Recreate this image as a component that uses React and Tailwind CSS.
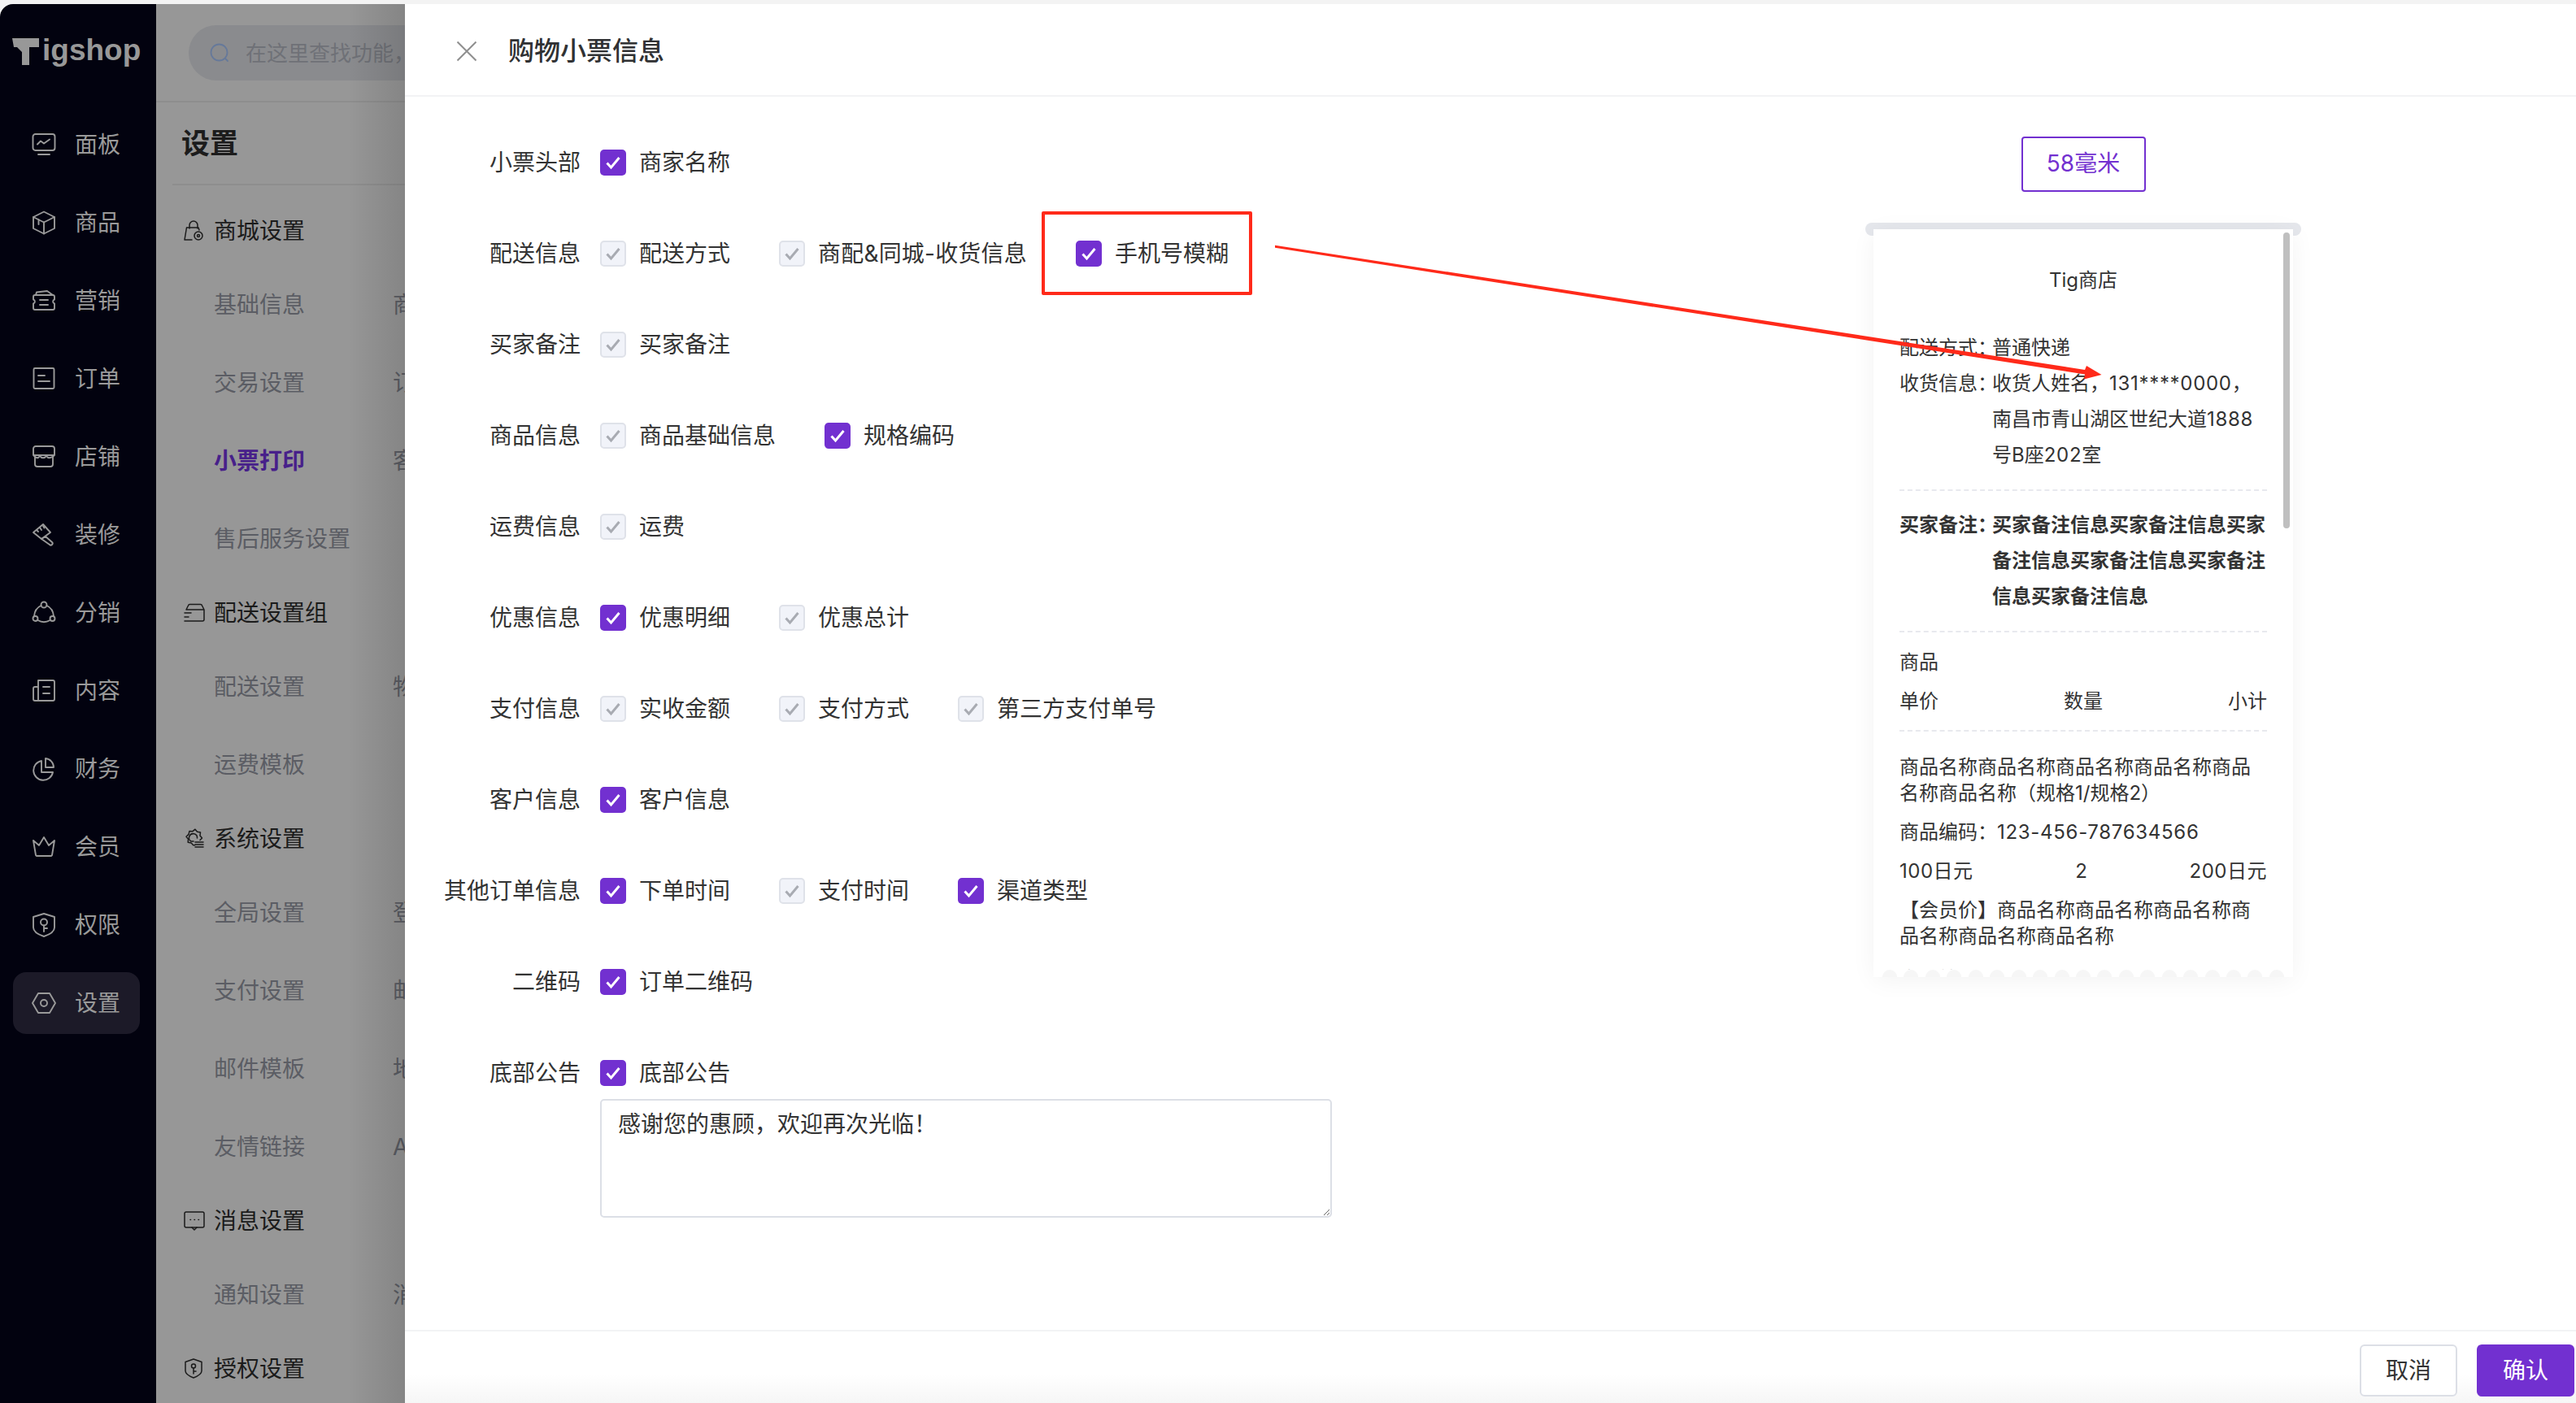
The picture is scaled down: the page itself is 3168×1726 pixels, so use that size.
import React from 'react';

// Sidebar icons, drawn on a 30 box
const navIcons = {
  panel: (<><rect x="1.500" y="2" width="27" height="20" rx="3" /><path d="M7 14.500l4-4 4 3 7-5" /><path d="M8 27h14" /></>),
  goods: (<><path d="M15 1.500l13 6.500v14l-13 6.500L2 22V8z" /><path d="M2 8l13 6.500L28 8M15 14.500v14M8.500 11v6" /></>),
  ticket: (<><path d="M4 8h22a2 2 0 0 1 2 2v3.500a2.600 2.600 0 0 0 0 5V24a2 2 0 0 1-2 2H4a2 2 0 0 1-2-2v-5.500a2.600 2.600 0 0 0 0-5V10a2 2 0 0 1 2-2z" /><path d="M5 8l1-3.500 13-1.500 7 5M10 14h10M10 20h10" /></>),
  order: (<><rect x="2.500" y="2" width="25" height="25" rx="1.500" /><path d="M8 11h8M8 18h14" /></>),
  shop: (<><path d="M5 2h20a3 3 0 0 1 3 3v8H2V5a3 3 0 0 1 3-3z" /><path d="M4 13v11a3 3 0 0 0 3 3h16a3 3 0 0 0 3-3V13" /><path d="M3 14c3 3 5 3 7 0 2 3 6 3 8 0 2 3 5 3 9 0" /></>),
  brush: (<><path d="M2 12L14 2l9 10-11 8z" /><path d="M6 9l2 2M10 6l2 3M14 4l1.500 2.500M12 20l5-3 8 7a2 2 0 0 1-3 3z" /></>),
  share: (<><circle cx="15" cy="5" r="3.500" /><circle cx="4.500" cy="22" r="3" /><circle cx="25.500" cy="22" r="3" /><path d="M11.500 6C7 8 3.500 13 3 19M18.500 6c4.500 2 8 7 8.500 13M7.500 24c5 3 10 3 15 0" /></>),
  content: (<><path d="M8 2h18a2 2 0 0 1 2 2v21a2 2 0 0 1-2 2H4a2 2 0 0 1-2-2V12a2 2 0 0 1 2-2h4z" /><path d="M8 10v17M14 10h8M14 18h8" /></>),
  pie: (<><path d="M12 5a12 12 0 1 0 14 14H12z" /><path d="M17 2a11 11 0 0 1 10 11H17z" /></>),
  crown: (<><path d="M2 7l7 6 6-10 6 10 7-6-3 18a2 2 0 0 1-2 1H7a2 2 0 0 1-2-1z" /></>),
  shield: (<><path d="M15 1l13 4v13c0 5-7 9-13 11C9 27 2 23 2 18V5z" /><circle cx="15" cy="11.500" r="4" /><path d="M15 15.500V23M15 19h4" /></>),
  gear: (<><path d="M8 3h14l7 12-7 12H8L1 15z" /><circle cx="15" cy="15" r="4" /></>),
};

const menuIcons = {
  bag: (<><path d="M7 10V6a5 5 0 0 1 10 0v4" /><path d="M4 9h14l1 3M3.500 9L1 24h9" /><circle cx="18" cy="19" r="5" /><circle cx="18" cy="19" r="1.500" /></>),
  box: (<><path d="M3 9l2.500-5a2 2 0 0 1 2-1.500h13a2 2 0 0 1 2 1.500L25 9v12a2 2 0 0 1-2 2H1M3 9h22M1 13h8M1 18h5" /></>),
  cog: (<><path d="M20 14.500l2.500-2.500-2.500-3 .5-4-4-.8-2.500-3-3 2.500-4-.3-1 4-3 2.800 2.500 3-.3 4 4 .8 2.500 2.800h2" /><path d="M16.500 12a5 5 0 1 0-7.500 4h3M14 17h10M14 20h10M14 23h10" /></>),
  msg: (<><rect x="1" y="2" width="24" height="19" rx="2" /><path d="M10 21l3 3 3-3M8 11.500h.500M13 11.500h.500M18 11.500h.500" /></>),
  key: (<><path d="M12 1l10 3.500v11c0 4-5 6.500-10 8.500-5-2-10-4.500-10-8.500v-11z" /><circle cx="12" cy="9.500" r="2.500" /><path d="M12 12v7M12 16h3" /></>),
};

const nav = [
  ['panel', '面板'], ['goods', '商品'], ['ticket', '营销'], ['order', '订单'], ['shop', '店铺'], ['brush', '装修'],
  ['share', '分销'], ['content', '内容'], ['pie', '财务'], ['crown', '会员'], ['shield', '权限'], ['gear', '设置'],
];

const menu = [
  { icon: 'bag', title: '商城设置' },
  { name: '基础信息', other: '商品设置' },
  { name: '交易设置', other: '订单设置' },
  { name: '小票打印', other: '客服设置', active: true },
  { name: '售后服务设置' },
  { icon: 'box', title: '配送设置组' },
  { name: '配送设置', other: '物流公司' },
  { name: '运费模板' },
  { icon: 'cog', title: '系统设置' },
  { name: '全局设置', other: '登录设置' },
  { name: '支付设置', other: '邮箱设置' },
  { name: '邮件模板', other: '地区管理' },
  { name: '友情链接', other: 'API设置' },
  { icon: 'msg', title: '消息设置' },
  { name: '通知设置', other: '消息模板' },
  { icon: 'key', title: '授权设置' },
];

// [label, [text, checked, extra class]...]
const rows = [
  ['小票头部', [['商家名称', true]]],
  ['配送信息', [['配送方式', false], ['商配&同城-收货信息', false, 'tracking-[0.2px]'], ['手机号模糊', true]]],
  ['买家备注', [['买家备注', false]]],
  ['商品信息', [['商品基础信息', false], ['规格编码', true]]],
  ['运费信息', [['运费', false]]],
  ['优惠信息', [['优惠明细', true], ['优惠总计', false]]],
  ['支付信息', [['实收金额', false], ['支付方式', false], ['第三方支付单号', false]]],
  ['客户信息', [['客户信息', true]]],
  ['其他订单信息', [['下单时间', true], ['支付时间', false], ['渠道类型', true]]],
  ['二维码', [['订单二维码', true]]],
];

function Check({ on, text, extra = '' }) {
  return (
    <div className="flex items-center gap-4 mr-[60px]">
      <span className={on
        ? 'flex items-center justify-center w-8 h-8 rounded-[5px] bg-[#7230d0]'
        : 'flex items-center justify-center w-8 h-8 rounded-[5px] bg-[#f1f3f9] border-2 border-[#dfe2e9]'}>
        <svg width="24" height="24" viewBox="0 0 24 24" fill="none" stroke={on ? '#ffffff' : '#a8abb2'} strokeWidth="3">
          <path d="M4.500 12.500l5 5.500 10-12" />
        </svg>
      </span>
      <span className={`whitespace-nowrap ${extra}`}>{text}</span>
    </div>
  );
}

function Dash() {
  return <div className="border-t-2 border-dashed border-[#e8e9ee]" />;
}

export default function App() {
  return (
    <div className="relative w-[3168px] h-[1726px] overflow-hidden bg-[#f3f3f3] font-['Inter','Noto_Sans_CJK_SC',sans-serif] text-[28px] text-[#333333]">
      <div className="h-[5px]" />
      <div className="flex h-[1721px]">
        {/* sidebar */}
        <div className="w-[192px] shrink-0 bg-[#02020f] rounded-tl-[16px] text-[#9a9a9a]">
          <div className="flex items-start h-[135px] pl-[15px] pt-[33px]">
            <svg width="34" height="34" viewBox="0 0 34 34" className="shrink-0 mt-[9px]" fill="#989898">
              <path d="M0 0h33v11H21v22h-9V17L6 11H2z" />
            </svg>
            <span className="ml-[3px] font-['Liberation_Sans',sans-serif] font-bold text-[37px] leading-[48px] text-[#989898]">igshop</span>
          </div>
          <div className="flex flex-col gap-5">
            {nav.map(([icon, label]) => (
              <div key={label} className={label === '设置'
                ? 'flex items-center gap-[23px] h-[76px] ml-4 mr-5 pl-[23px] rounded-[16px] bg-[#1c1a28]'
                : 'flex items-center gap-[23px] h-[76px] ml-4 mr-5 pl-[23px] rounded-[16px]'}>
                <svg width="30" height="30" viewBox="0 0 30 30" fill="none" stroke="#9a9a9a" strokeWidth="1.900" strokeLinejoin="round" strokeLinecap="round">
                  {navIcons[icon]}
                </svg>
                <span>{label}</span>
              </div>
            ))}
          </div>
        </div>

        {/* settings column, under the drawer mask */}
        <div className="relative w-[306px] shrink-0 overflow-hidden bg-[#979797]">
          <div className="h-[121px] pl-10 pt-[26px] border-b-2 border-[#8e8e8e]">
            <div className="flex items-center gap-[20px] w-[500px] h-[68px] pl-[26px] rounded-full bg-[#8a8b8e] text-[26px] text-[#6f7177] whitespace-nowrap">
              <svg width="24" height="24" viewBox="0 0 24 24" fill="none" stroke="#66799a" strokeWidth="1.800" strokeLinecap="round">
                <circle cx="11.500" cy="11.500" r="10" /><path d="M19 19l3 3" />
              </svg>
              在这里查找功能，
            </div>
          </div>
          <div className="ml-[20px] h-[102px] pl-[11px] flex items-center border-b-2 border-[#8e8e8e]">
            <span className="text-[35px] font-bold text-[#1c1c1c]">设置</span>
          </div>
          <div className="mt-[13px]">
            {menu.map((m) => m.title ? (
              <div key={m.title} className="flex items-center h-[86px] pl-[34px] text-[#1b1b1b]">
                <svg width="26" height="26" viewBox="0 0 26 26" fill="none" stroke="#1b1b1b" strokeWidth="1.500" strokeLinejoin="round" strokeLinecap="round" className="shrink-0">
                  {menuIcons[m.icon]}
                </svg>
                <span className="ml-[11px] whitespace-nowrap">{m.title}</span>
              </div>
            ) : (
              <div key={m.name} className="flex items-center h-[96px] pl-[71px] text-[#5b5d64] whitespace-nowrap">
                <span className={m.active ? 'w-[220px] shrink-0 font-semibold text-[#47208a]' : 'w-[220px] shrink-0'}>{m.name}</span>
                <span>{m.other}</span>
              </div>
            ))}
          </div>
          <div className="absolute inset-y-0 right-0 w-[70px] bg-linear-to-r from-transparent to-black/12" />
        </div>

        {/* drawer */}
        <div className="flex flex-col flex-1 min-w-0 bg-white">
          <div className="flex items-center shrink-0 h-[114px] pl-[63px] pt-1 border-b-2 border-[#f2f3f5]">
            <svg width="26" height="26" viewBox="0 0 26 26" fill="none" stroke="#8f8f8f" strokeWidth="2">
              <path d="M1.500 1.500l23 23M24.500 1.500l-23 23" />
            </svg>
            <span className="ml-[38px] text-[32px] font-medium text-[#303133]">购物小票信息</span>
          </div>

          <div className="flex flex-1 min-h-0">
            <div className="flex-1 flex flex-col gap-20 pl-10 pt-[65px]">
              {rows.map(([label, items]) => (
                <div key={label} className="flex items-center h-8">
                  <span className="w-[176px] mr-6 text-right whitespace-nowrap">{label}</span>
                  {items.map(([text, on, extra]) => <Check key={text} text={text} on={on} extra={extra} />)}
                </div>
              ))}
              <div className="flex items-start">
                <span className="w-[176px] mr-6 h-8 leading-8 text-right">底部公告</span>
                <div className="flex flex-col gap-4">
                  <div className="flex items-center h-8"><Check text="底部公告" on /></div>
                  <textarea
                    defaultValue="感谢您的惠顾，欢迎再次光临！"
                    className="block w-[900px] h-[146px] px-5 py-2 leading-[42px] border-2 border-[#dcdfe6] rounded-[5px] outline-none"
                  />
                </div>
              </div>
            </div>

            {/* receipt preview */}
            <div className="w-[536px] mr-[338px] shrink-0 flex flex-col items-center pt-[49px]">
              <div className="flex items-center justify-center w-[153px] h-[68px] pb-[2px] border-2 border-[#7230d0] rounded-[4px] text-[#7230d0]">58毫米</div>
              <div className="w-full h-4 mt-[38px] rounded-[8px] bg-[#e5e7ec]" />
              <div className="-mt-2 w-[516px] relative shadow-[0_4px_28px_rgba(0,0,0,0.05)]">
                <div className="relative h-[911px] overflow-hidden bg-white px-8 pt-[41px] text-[24px] leading-[44px] text-[#333333]">
                  <div className="text-center">Tig商店</div>
                  <div className="flex mt-[39px]"><span className="w-[114px] shrink-0 whitespace-nowrap">配送方式：</span><span>普通快递</span></div>
                  <div className="flex">
                    <span className="w-[114px] shrink-0 whitespace-nowrap">收货信息：</span>
                    <span>收货人姓名，<span className="tracking-[0.7px]">131****0000</span>，<br />南昌市青山湖区世纪大道<span className="tracking-[0.7px]">1888</span><br />号B座<span className="tracking-[0.7px]">202</span>室</span>
                  </div>
                  <div className="mt-5"><Dash /></div>
                  <div className="flex mt-5 font-bold"><span className="w-[114px] shrink-0 whitespace-nowrap">买家备注：</span><span>买家备注信息买家备注信息买家备注信息买家备注信息买家备注信息买家备注信息</span></div>
                  <div className="mt-5"><Dash /></div>
                  <div className="mt-[15px]">商品</div>
                  <div className="flex justify-between mt-1"><span>单价</span><span>数量</span><span>小计</span></div>
                  <div className="mt-[13px]"><Dash /></div>
                  <div className="mt-7 leading-8">商品名称商品名称商品名称商品名称商品名称商品名称（规格1/规格2）</div>
                  <div className="mt-4 leading-8">商品编码：<span className="tracking-[0.7px]">123-456-787634566</span></div>
                  <div className="flex justify-between mt-4 leading-8"><span className="tracking-[0.5px]">100日元</span><span>2</span><span className="tracking-[0.5px]">200日元</span></div>
                  <div className="mt-4 leading-8">【会员价】商品名称商品名称商品名称商品名称商品名称商品名称</div>
                  <div className="mt-[21px] leading-8 text-[#999999]">商品编码：<span className="tracking-[0.7px]">123-456-787634566</span></div>
                  <div className="absolute right-1 top-1 w-2 h-[364px] rounded-full bg-[#bfbfbf]" />
                </div>
                <div className="flex justify-between h-[9px] px-[11px] bg-white">
                  {Array.from({ length: 19 }).map((_, i) => (
                    <span key={i} className="w-[18px] h-[9px] rounded-t-full bg-[#f6f6f6]" />
                  ))}
                </div>
              </div>
            </div>
          </div>

          <div className="flex items-start justify-end gap-6 shrink-0 h-[90px] pt-4 pr-[2px] border-t-2 border-[#f2f3f5] bg-linear-to-b from-white from-60% to-[#f6f6f6]">
            <div className="flex items-center justify-center w-[120px] h-16 bg-white border-2 border-[#dcdfe6] rounded-[6px]">取消</div>
            <div className="flex items-center justify-center w-[120px] h-16 bg-[#7230d0] rounded-[6px] text-white">确认</div>
          </div>
        </div>
      </div>

      {/* red annotation on top of the screenshot */}
      <div className="absolute left-[1281px] top-[260px] w-[259px] h-[103px] border-4 border-[#ff2a1a] rounded-[2px]" />
      <svg className="absolute left-[1560px] top-[295px]" width="1040" height="180" viewBox="0 0 1040 180" fill="#ff2a1a">
        <path d="M8 6.800L1004 160 1006 155 1024.500 166 1003 171.500 1004 165.500 8 9.800z" />
      </svg>
    </div>
  );
}
